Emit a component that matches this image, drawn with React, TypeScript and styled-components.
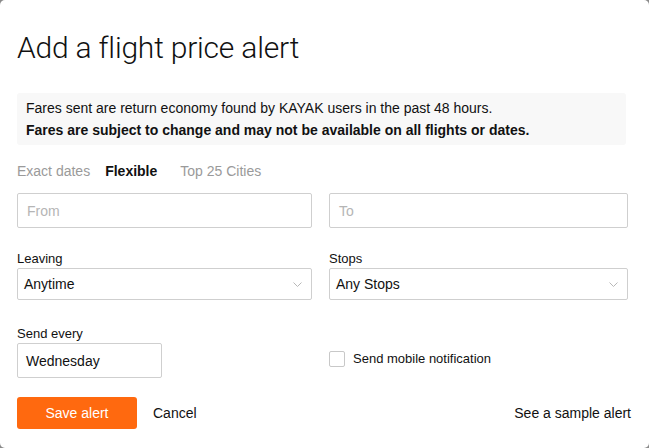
import React from "react";
import styled, { createGlobalStyle } from "styled-components";

const Global = createGlobalStyle`
  html, body { margin: 0; padding: 0; background: #8a8a8a; }
  body { font-family: "Liberation Sans", Arial, sans-serif; color: #1a1a1a; }
  * { box-sizing: border-box; }
`;

const Modal = styled.div`
  width: 649px;
  height: 448px;
  background: #fff;
  border-radius: 5px;
  padding: 30px 17px 0 17px;
  overflow: hidden;
`;

const Title = styled.h1`
  margin: 0;
  font-family: Roboto, "Liberation Sans", sans-serif;
  font-weight: 300;
  font-size: 30px;
  line-height: 36px;
  color: #111;
  letter-spacing: -0.2px;
`;

const Info = styled.div`
  margin-top: 27px;
  width: 609px;
  background: #f8f8f8;
  border-radius: 3px;
  padding: 4px 9px 4px 9px;
  font-size: 14px;
  line-height: 22px;
  color: #111;
`;

const Strong = styled.div`
  font-weight: 700;
`;

const Tabs = styled.div`
  display: flex;
  gap: 15px;
  margin-top: 17px;
  font-size: 14px;
  line-height: 18px;
`;

const Tab = styled.span<{ $active?: boolean }>`
  color: ${(p) => (p.$active ? "#111" : "#9a9a9a")};
  font-weight: ${(p) => (p.$active ? 700 : 400)};
  margin-right: ${(p) => (p.$active ? "8px" : "0")};
`;

const Grid = styled.div`
  display: grid;
  grid-template-columns: 295px 299px;
  column-gap: 17px;
`;

const TextBox = styled.div<{ $placeholder?: boolean; $height?: number }>`
  height: ${(p) => p.$height ?? 35}px;
  border: 1px solid #cfcfcf;
  border-radius: 2px;
  display: flex;
  align-items: center;
  padding: 0 9px;
  font-size: 14px;
  color: ${(p) => (p.$placeholder ? "#b5b5b5" : "#111")};
  background: #fff;
`;

const Row = styled(Grid)<{ $top: number }>`
  margin-top: ${(p) => p.$top}px;
`;

const Field = styled.div`
  display: flex;
  flex-direction: column;
`;

const Label = styled.div`
  font-size: 13px;
  line-height: 16px;
  color: #111;
  margin-bottom: 1px;
`;

const Select = styled(TextBox)`
  justify-content: space-between;
  padding: 0 9px 0 6px;
`;

const Chevron = () => (
  <svg width="9" height="5" viewBox="0 0 9 5" fill="none">
    <path d="M0.5 0.5l4 4 4-4" stroke="#b8b8b8" strokeWidth="1" />
  </svg>
);

const DayBox = styled(TextBox)`
  width: 145px;
  padding: 0 7px 0 8px;
`;

const CheckRow = styled.div`
  display: flex;
  align-items: center;
  gap: 8px;
  font-size: 13px;
  color: #111;
  margin-top: 13px;
`;

const Check = styled.span`
  width: 16px;
  height: 16px;
  border: 1px solid #c8c8c8;
  border-radius: 2px;
  display: inline-block;
`;

const Footer = styled.div`
  display: flex;
  align-items: center;
  margin-top: 19px;
  width: 614px;
`;

const SaveButton = styled.button`
  width: 120px;
  height: 32px;
  border: none;
  border-radius: 3px;
  background: #ff690f;
  color: #fff;
  font-family: "Liberation Sans", Arial, sans-serif;
  font-size: 14px;
  padding: 0;
`;

const LinkText = styled.span<{ $push?: boolean }>`
  font-size: 14px;
  color: #111;
  margin-left: ${(p) => (p.$push ? "auto" : "16px")};
`;

export default function App() {
  return (
    <>
      <Global />
      <Modal>
        <Title>Add a flight price alert</Title>
        <Info>
          <div>Fares sent are return economy found by KAYAK users in the past 48 hours.</div>
          <Strong>Fares are subject to change and may not be available on all flights or dates.</Strong>
        </Info>
        <Tabs>
          <Tab>Exact dates</Tab>
          <Tab $active>Flexible</Tab>
          <Tab>Top 25 Cities</Tab>
        </Tabs>
        <Row $top={13}>
          <TextBox $placeholder>From</TextBox>
          <TextBox $placeholder>To</TextBox>
        </Row>
        <Row $top={23}>
          <Field>
            <Label>Leaving</Label>
            <Select $height={32}>
              <span>Anytime</span>
              <Chevron />
            </Select>
          </Field>
          <Field>
            <Label>Stops</Label>
            <Select $height={32}>
              <span>Any Stops</span>
              <Chevron />
            </Select>
          </Field>
        </Row>
        <Row $top={26}>
          <Field>
            <Label>Send every</Label>
            <DayBox>Wednesday</DayBox>
          </Field>
          <CheckRow>
            <Check />
            <span>Send mobile notification</span>
          </CheckRow>
        </Row>
        <Footer>
          <SaveButton>Save alert</SaveButton>
          <LinkText>Cancel</LinkText>
          <LinkText $push>See a sample alert</LinkText>
        </Footer>
      </Modal>
    </>
  );
}
